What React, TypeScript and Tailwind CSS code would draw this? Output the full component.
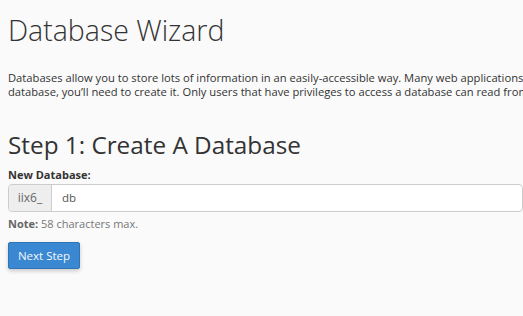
const App = () => {
  return (
    <div
      className="min-h-screen w-[523px] overflow-hidden bg-[#fafafa] pl-2 pt-4 text-[#333]"
      style={{ fontFamily: '"Open Sans", sans-serif' }}
    >
      <h1 className="whitespace-nowrap text-[28.5px] font-light leading-[28px] text-[#333]">Database Wizard</h1>

      <p className="mt-[27px] whitespace-nowrap text-[11.2px] leading-[14px] text-[#333]">
        Databases allow you to store lots of information in an easily-accessible way. Many web applications require
        access to a
        <br />
        database, you&rsquo;ll need to create it. Only users that have privileges to access a database can read from or
        write to that database.
      </p>

      <h2 className="mt-[34px] whitespace-nowrap text-[24.3px] leading-[24px] text-[#333]">Step 1: Create A Database</h2>

      <form className="mt-[10px]" onSubmit={(e) => e.preventDefault()}>
        <label className="block text-[11px] font-bold leading-[15px] text-[#333]">New Database:</label>
        <div className="mt-[2px] flex h-[28px] w-[515px] rounded border border-[#ccc] bg-white">
          <span className="flex w-[43px] items-center justify-center rounded-l border-r border-[#ccc] bg-[#eee] text-[12px] text-[#666]">
            iix6_
          </span>
          <input
            defaultValue="db"
            className="flex-1 bg-transparent px-[10px] text-[11.5px] text-[#555] outline-none"
          />
        </div>
        <p className="mt-[4px] text-[11px] leading-[15px] text-[#777]">
          <span className="font-bold text-[#666]">Note:</span> 58 characters max.
        </p>
        <button
          type="submit"
          className="mt-[11px] h-[27px] w-[72px] rounded-[2px] border border-[#2f74b5] bg-[#3a88d1] text-[11.5px] text-[#f4f8fc] shadow-[0_2px_4px_rgba(0,0,0,0.2)]"
        >
          Next Step
        </button>
      </form>
    </div>
  );
};

export default App;
